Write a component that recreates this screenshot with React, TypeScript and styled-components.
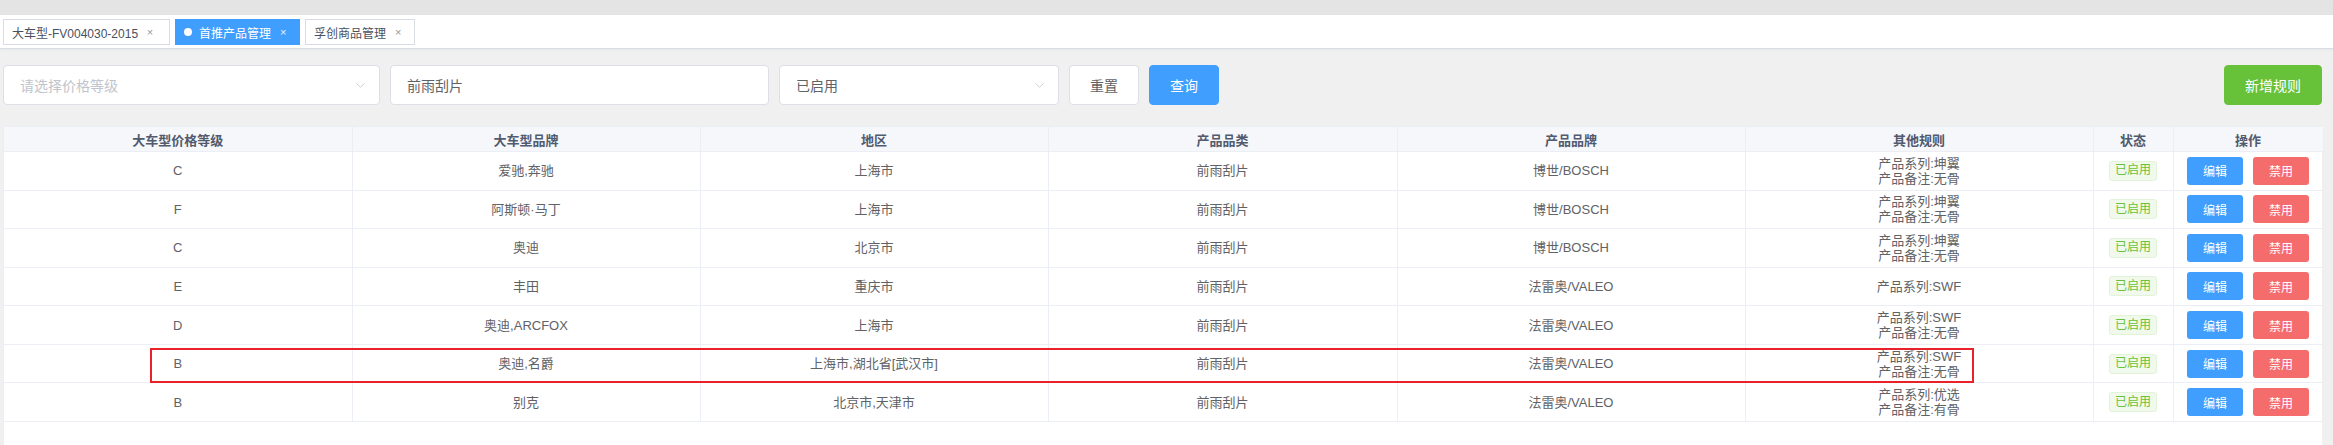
import React from "react";
import styled, { createGlobalStyle } from "styled-components";
import { ChevronDown } from "lucide-react";

interface IRule {
  level: string;
  brand: string;
  region: string;
  category: string;
  productBrand: string;
  rules: string[];
}

const rows: IRule[] = [
  { level: "C", brand: "爱驰,奔驰", region: "上海市", category: "前雨刮片", productBrand: "博世/BOSCH", rules: ["产品系列:坤翼", "产品备注:无骨"] },
  { level: "F", brand: "阿斯顿·马丁", region: "上海市", category: "前雨刮片", productBrand: "博世/BOSCH", rules: ["产品系列:坤翼", "产品备注:无骨"] },
  { level: "C", brand: "奥迪", region: "北京市", category: "前雨刮片", productBrand: "博世/BOSCH", rules: ["产品系列:坤翼", "产品备注:无骨"] },
  { level: "E", brand: "丰田", region: "重庆市", category: "前雨刮片", productBrand: "法雷奥/VALEO", rules: ["产品系列:SWF"] },
  { level: "D", brand: "奥迪,ARCFOX", region: "上海市", category: "前雨刮片", productBrand: "法雷奥/VALEO", rules: ["产品系列:SWF", "产品备注:无骨"] },
  { level: "B", brand: "奥迪,名爵", region: "上海市,湖北省[武汉市]", category: "前雨刮片", productBrand: "法雷奥/VALEO", rules: ["产品系列:SWF", "产品备注:无骨"] },
  { level: "B", brand: "别克", region: "北京市,天津市", category: "前雨刮片", productBrand: "法雷奥/VALEO", rules: ["产品系列:优选", "产品备注:有骨"] },
];

const tabs = [
  { title: "大车型-FV004030-2015", active: false, pad: 11 },
  { title: "首推产品管理", active: true, pad: 8 },
  { title: "孚创商品管理", active: false, pad: 8 },
];

const columns = ["大车型价格等级", "大车型品牌", "地区", "产品品类", "产品品牌", "其他规则", "状态", "操作"];
const colWidths = [348, 348, 348, 349, 348, 348, 80, 150];

const GlobalStyle = createGlobalStyle`
  html, body {
    margin: 0;
    padding: 0;
    background: #f0f0f0;
    font-family: "Liberation Sans", "Noto Sans CJK SC", sans-serif;
    overflow: hidden;
  }
  * {
    box-sizing: border-box;
  }
`;

const TopStrip = styled.div`
  height: 15px;
  background: #e4e4e4;
`;

const TagsBar = styled.div`
  height: 34px;
  background: #fff;
  border-bottom: 1px solid #d8dce5;
  box-shadow: 0 1px 3px 0 rgba(0, 0, 0, 0.04);
  display: flex;
  align-items: flex-start;
  gap: 5px;
  padding: 4px 0 0 3px;
`;

const Tab = styled.div<{ $active?: boolean; $pad: number }>`
  display: inline-flex;
  align-items: center;
  height: 26px;
  padding: 0 ${(p) => p.$pad}px 0 8px;
  border: 1px solid ${(p) => (p.$active ? "#409eff" : "#d8dce5")};
  background: ${(p) => (p.$active ? "#409eff" : "#fff")};
  color: ${(p) => (p.$active ? "#fff" : "#495060")};
  font-size: 12px;
  white-space: nowrap;
`;

const Dot = styled.span`
  width: 8px;
  height: 8px;
  border-radius: 50%;
  background: #fff;
  margin-right: 7px;
`;

const Close = styled.span<{ $active?: boolean }>`
  width: 16px;
  height: 16px;
  margin-left: 4px;
  display: inline-flex;
  align-items: center;
  justify-content: center;
  font-size: 11px;
  color: ${(p) => (p.$active ? "#e6f1ff" : "#999")};
`;

const Main = styled.div`
  padding: 16px 11px 0 3px;
`;

const FilterRow = styled.div`
  display: flex;
  align-items: center;
  gap: 10px;
  height: 40px;
`;

const Field = styled.div<{ $width: number }>`
  width: ${(p) => p.$width}px;
  height: 40px;
  background: #fff;
  border: 1px solid #dcdfe6;
  border-radius: 4px;
  display: flex;
  align-items: center;
  justify-content: space-between;
  padding: 0 11px 0 16px;
  font-size: 14px;
  color: #606266;
  font-family: "Noto Sans CJK SC", sans-serif;
`;

const Placeholder = styled.span`
  color: #c0c4cc;
`;

const Button = styled.button<{ $kind: "default" | "primary" | "success" }>`
  height: 40px;
  padding: 0 20px;
  border-radius: 4px;
  font-size: 14px;
  font-family: "Noto Sans CJK SC", sans-serif;
  border: 1px solid
    ${(p) => (p.$kind === "primary" ? "#409eff" : p.$kind === "success" ? "#67c23a" : "#dcdfe6")};
  background: ${(p) => (p.$kind === "primary" ? "#409eff" : p.$kind === "success" ? "#67c23a" : "#fff")};
  color: ${(p) => (p.$kind === "default" ? "#606266" : "#fff")};
  width: ${(p) => (p.$kind === "success" ? "98px" : "70px")};
  cursor: pointer;
`;

const Spacer = styled.div`
  flex: 1;
`;

const TableWrap = styled.div`
  position: relative;
  margin-top: 21px;
  background: #fff;
  border-left: 1px solid #ebeef5;
  min-height: 400px;
`;

const Table = styled.table`
  width: 2319px;
  table-layout: fixed;
  border-collapse: collapse;
  font-family: "Liberation Sans", "Noto Sans CJK SC", sans-serif;
`;

const Th = styled.th`
  height: 25px;
  padding: 0;
  background: #f5f7fa;
  border: 1px solid #ebeef5;
  border-left: none;
  color: #515a6e;
  font-size: 13px;
  font-weight: 700;
  text-align: center;
`;

const Td = styled.td`
  height: 38.57px;
  padding: 0;
  border-bottom: 1px solid #ebeef5;
  border-right: 1px solid #ebeef5;
  color: #606266;
  font-size: 13px;
  line-height: 15px;
  text-align: center;
`;

const Tag = styled.span`
  display: inline-flex;
  align-items: center;
  justify-content: center;
  width: 48px;
  height: 20px;
  border: 1px solid #e1f3d8;
  background: #f0f9eb;
  color: #67c23a;
  border-radius: 3px;
  font-size: 12px;
`;

const Actions = styled.div`
  display: flex;
  justify-content: center;
  gap: 10px;
`;

const SmallButton = styled.button<{ $danger?: boolean }>`
  width: 56px;
  height: 28px;
  border: none;
  border-radius: 3px;
  background: ${(p) => (p.$danger ? "#f56c6c" : "#409eff")};
  color: #fff;
  font-size: 12px;
  font-family: "Noto Sans CJK SC", sans-serif;
`;

const Highlight = styled.div`
  position: absolute;
  left: 146px;
  top: 222px;
  width: 1824px;
  height: 35px;
  border: 2px solid #e8212b;
  pointer-events: none;
`;

export default function App() {
  return (
    <>
      <GlobalStyle />
      <TopStrip />
      <TagsBar>
        {tabs.map((t) => (
          <Tab key={t.title} $active={t.active} $pad={t.pad}>
            {t.active && <Dot />}
            {t.title}
            <Close $active={t.active}>×</Close>
          </Tab>
        ))}
      </TagsBar>
      <Main>
        <FilterRow>
          <Field $width={377}>
            <Placeholder>请选择价格等级</Placeholder>
            <ChevronDown size={15} color="#c0c4cc" strokeWidth={1.3} />
          </Field>
          <Field $width={379}>前雨刮片</Field>
          <Field $width={280}>
            <span>已启用</span>
            <ChevronDown size={15} color="#c0c4cc" strokeWidth={1.3} />
          </Field>
          <Button $kind="default">重置</Button>
          <Button $kind="primary">查询</Button>
          <Spacer />
          <Button $kind="success">新增规则</Button>
        </FilterRow>
        <TableWrap>
          <Table>
            <colgroup>
              {colWidths.map((w, i) => (
                <col key={i} style={{ width: w }} />
              ))}
            </colgroup>
            <thead>
              <tr>
                {columns.map((c) => (
                  <Th key={c}>{c}</Th>
                ))}
              </tr>
            </thead>
            <tbody>
              {rows.map((r, i) => (
                <tr key={i}>
                  <Td>{r.level}</Td>
                  <Td>{r.brand}</Td>
                  <Td>{r.region}</Td>
                  <Td>{r.category}</Td>
                  <Td>{r.productBrand}</Td>
                  <Td>
                    {r.rules.map((line) => (
                      <div key={line}>{line}</div>
                    ))}
                  </Td>
                  <Td>
                    <Tag>已启用</Tag>
                  </Td>
                  <Td>
                    <Actions>
                      <SmallButton>编辑</SmallButton>
                      <SmallButton $danger>禁用</SmallButton>
                    </Actions>
                  </Td>
                </tr>
              ))}
            </tbody>
          </Table>
          <Highlight />
        </TableWrap>
      </Main>
    </>
  );
}
